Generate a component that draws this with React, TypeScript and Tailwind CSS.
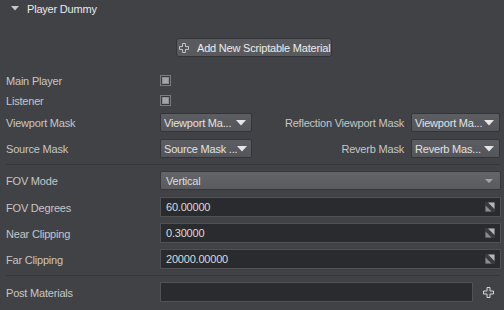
import React from "react";

const Tri = ({ color = "#e6e6e6" }: { color?: string }) => (
  <svg width="10" height="6" viewBox="0 0 10 6" className="shrink-0">
    <polygon points="0,0 10,0 5,5.5" fill={color} />
  </svg>
);

const PlusIcon = ({ size = 11 }: { size?: number }) => (
  <svg width={size} height={size} viewBox="0 0 11 11" className="shrink-0">
    <path
      d="M4 0.5 H7 V4 H10.5 V7 H7 V10.5 H4 V7 H0.5 V4 H4 Z"
      fill="#4a4b4f"
      stroke="#d6d6d6"
      strokeWidth="1"
    />
  </svg>
);

const ResizeIcon = () => (
  <svg width="10" height="10" viewBox="0 0 10 10" className="shrink-0">
    <rect x="0" y="0" width="10" height="10" fill="#3a3b3e" />
    <polygon points="3,0.5 9.5,0.5 9.5,7" fill="#b5b5b7" />
    <polygon points="0.5,3.5 0.5,9.5 6.5,9.5" fill="#8b8c8f" />
  </svg>
);

const Checkbox = () => (
  <div className="w-[11px] h-[11px] border border-[#7a7b7e] bg-[#3a3b3e] p-[1px] flex">
    <div className="flex-1 bg-[#a3a4a6] border border-[#8e8f92]" />
  </div>
);

const Dropdown = ({ text, w }: { text: string; w: string }) => (
  <div
    className={`${w} h-[19px] flex items-center justify-between pl-[3px] pr-[5px] rounded-[2px] border border-[#343538] bg-gradient-to-b from-[#5d5e62] to-[#54555a] text-[#e2e2e2] shrink-0`}
  >
    <span className="whitespace-nowrap pt-[1px]">{text}</span>
    <Tri />
  </div>
);

const Input = ({ value }: { value: string }) => (
  <div className="flex-1 h-[20px] flex items-center justify-between pl-[5px] pr-[5px] border border-[#505154] bg-[#2a2b2e] text-[#dadada]">
    <span className="pt-[1px]">{value}</span>
    <ResizeIcon />
  </div>
);

const Label = ({ children }: { children: React.ReactNode }) => (
  <div className="w-[154px] shrink-0 pt-[2px] text-[#c6c6c6] whitespace-nowrap">{children}</div>
);

export default function App() {
  return (
    <div
      className="w-[504px] h-[310px] overflow-hidden bg-[#414246] text-[11px] tracking-[-0.2px] leading-none"
      style={{ fontFamily: '"Liberation Sans", Arial, sans-serif' }}
    >
      {/* header */}
      <div className="h-[15px] mt-[1px] flex items-center pl-[11px]">
        <svg width="8" height="5" viewBox="0 0 8 5" className="mt-[-1px]">
          <polygon points="0,0 8,0 4,4.5" fill="#c8c8c8" />
        </svg>
        <span className="ml-[8px] pt-[2px] text-[#eaeaea]">Player Dummy</span>
      </div>

      <div className="pl-[6px] pr-[3px]">
        {/* button */}
        <div className="mt-[22px] flex justify-center pl-[1px]">
          <div className="h-[19px] w-[156px] flex items-center pl-[2px] gap-[8px] rounded-[3px] border border-[#333437] bg-[#595a5e] text-[#ececec]">
            <PlusIcon size={10} />
            <span className="whitespace-nowrap pt-[1px]">Add New Scriptable Material</span>
          </div>
        </div>

        {/* checkboxes */}
        <div className="mt-[13px] h-[20px] flex items-center">
          <Label>Main Player</Label>
          <Checkbox />
        </div>
        <div className="h-[20px] flex items-center">
          <Label>Listener</Label>
          <Checkbox />
        </div>

        {/* masks */}
        <div className="mt-[3px] h-[19px] flex items-center">
          <Label>Viewport Mask</Label>
          <Dropdown text="Viewport Ma..." w="w-[92px]" />
          <div className="flex-1 text-right pr-[7px] pt-[2px] text-[#c6c6c6] whitespace-nowrap">
            Reflection Viewport Mask
          </div>
          <Dropdown text="Viewport Ma..." w="w-[89px]" />
          <div className="w-[1px]" />
        </div>
        <div className="mt-[7px] h-[19px] flex items-center">
          <Label>Source Mask</Label>
          <Dropdown text="Source Mask ..." w="w-[92px]" />
          <div className="flex-1 text-right pr-[7px] pt-[2px] text-[#c6c6c6] whitespace-nowrap">
            Reverb Mask
          </div>
          <Dropdown text="Reverb Mas..." w="w-[89px]" />
          <div className="w-[1px]" />
        </div>

        <div className="mt-[6px] mr-[1px] h-[1px] bg-[#35363a]" />

        {/* FOV */}
        <div className="mt-[6px] h-[19px] flex items-center">
          <Label>FOV Mode</Label>
          <div className="flex-1 h-[19px] flex items-center justify-between pl-[5px] pr-[7px] rounded-[2px] border border-[#36373a] bg-gradient-to-b from-[#646569] to-[#5a5b5f] text-[#dcdcdc]">
            <span className="pt-[1px]">Vertical</span>
            <svg width="8" height="4" viewBox="0 0 8 4">
              <polygon points="0,0 8,0 4,4" fill="#a4a5a8" />
            </svg>
          </div>
        </div>
        <div className="mt-[7px] h-[20px] flex items-center">
          <Label>FOV Degrees</Label>
          <Input value="60.00000" />
        </div>
        <div className="mt-[6px] h-[20px] flex items-center">
          <Label>Near Clipping</Label>
          <Input value="0.30000" />
        </div>
        <div className="mt-[6px] h-[20px] flex items-center">
          <Label>Far Clipping</Label>
          <Input value="20000.00000" />
        </div>

        <div className="mt-[6px] mr-[1px] h-[1px] bg-[#35363a]" />

        <div className="mt-[6px] h-[20px] flex items-center">
          <Label>Post Materials</Label>
          <div className="w-[313px] h-[20px] border border-[#505154] bg-[#2a2b2e]" />
          <div className="ml-[10px]">
            <PlusIcon />
          </div>
        </div>
      </div>
    </div>
  );
}
